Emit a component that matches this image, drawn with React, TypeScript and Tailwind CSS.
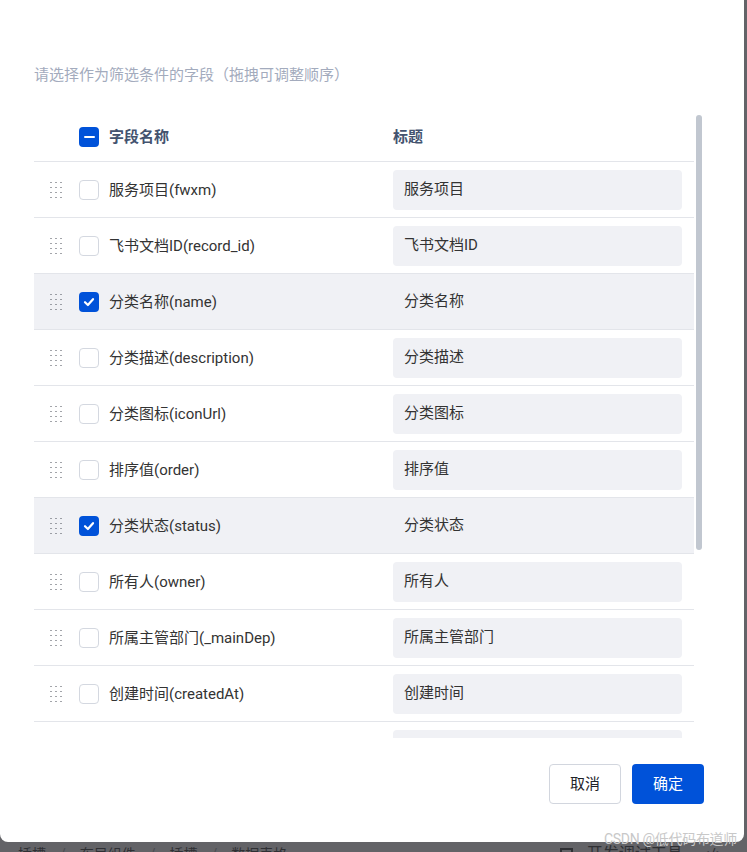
import React from "react";

type Field = { name: string; title: string; checked?: boolean };

const fields: Field[] = [
  { name: "服务项目(fwxm)", title: "服务项目" },
  { name: "飞书文档ID(record_id)", title: "飞书文档ID" },
  { name: "分类名称(name)", title: "分类名称", checked: true },
  { name: "分类描述(description)", title: "分类描述" },
  { name: "分类图标(iconUrl)", title: "分类图标" },
  { name: "排序值(order)", title: "排序值" },
  { name: "分类状态(status)", title: "分类状态", checked: true },
  { name: "所有人(owner)", title: "所有人" },
  { name: "所属主管部门(_mainDep)", title: "所属主管部门" },
  { name: "创建时间(createdAt)", title: "创建时间" },
  { name: "更新时间(updatedAt)", title: "更新时间" },
];

function DragHandle() {
  return (
    <svg width="12" height="18" viewBox="0 0 12 18" className="block">
      {[1, 6, 11].map((x) =>
        [1.5, 6.5, 11.5, 16.5].map((y) => (
          <rect key={`${x}-${y}`} x={x - 0.5} y={y - 0.5} width="1" height="1" fill="#474b55" />
        ))
      )}
    </svg>
  );
}

function Checkbox({ state }: { state: "on" | "off" | "partial" }) {
  if (state === "off") {
    return <div className="w-[20px] h-[20px] rounded-[4px] border border-[#d4d8e0] bg-white shrink-0" />;
  }
  return (
    <div className="w-[20px] h-[20px] rounded-[4px] bg-[#0052d9] shrink-0 flex items-center justify-center">
      {state === "on" ? (
        <svg width="14" height="14" viewBox="0 0 14 14">
          <path d="M3 7.2 L5.9 10 L11 4.2" fill="none" stroke="white" strokeWidth="2.2" strokeLinecap="round" strokeLinejoin="round" />
        </svg>
      ) : (
        <div className="w-[11px] h-[2.5px] bg-white rounded-[1px]" />
      )}
    </div>
  );
}

export default function App() {
  return (
    <div
      className="relative w-[747px] h-[852px] overflow-hidden bg-[#636367]"
      style={{ fontFamily: 'Roboto, "Noto Sans CJK SC", sans-serif' }}
    >
      {/* page behind the overlay */}
      <div className="flex items-center h-[20px] mt-[844px] pl-[18px] pr-[24px] text-[14px] text-[#2f3034] leading-[20px]">
        <span>插槽</span>
        <span className="mx-[14px] text-[#4a4b50]">/</span>
        <span>布局组件</span>
        <span className="mx-[14px] text-[#4a4b50]">/</span>
        <span>插槽</span>
        <span className="mx-[14px] text-[#4a4b50]">/</span>
        <span>数据表格</span>
        <div className="ml-auto flex items-center gap-[14px]">
          <div className="w-[13px] h-[13px] border-2 border-[#2f3034]" />
          <span className="text-[16px]">开发调试工具</span>
          <span className="ml-[6px]">&lt;/&gt;</span>
        </div>
      </div>

      {/* modal */}
      <div className="absolute left-0 top-0 w-[744px] h-[842px] bg-white rounded-b-[8px] flex flex-col pl-[34px] pt-[64px]">
        <p className="h-[22px] leading-[22px] text-[15px] text-[#a3abbd]">
          请选择作为筛选条件的字段（拖拽可调整顺序）
        </p>

        <div className="flex mt-[29px] h-[623px]">
          <div className="w-[660px] overflow-hidden">
            {/* header */}
            <div className="flex items-center h-[47px] pb-[2px] border-b border-[#e3e5ea]">
              <div className="w-[45px] shrink-0" />
              <Checkbox state="partial" />
              <div className="ml-[10px] w-[284px] text-[15px] font-bold text-[#44536f]">字段名称</div>
              <div className="text-[15px] font-bold text-[#44536f]">标题</div>
            </div>

            {fields.map((f) => (
              <div
                key={f.name}
                className={`flex items-center h-[56px] border-b border-[#e3e5ea] ${f.checked ? "bg-[#f0f1f5]" : "bg-white"}`}
              >
                <div className="w-[45px] shrink-0 pl-[16px]">
                  <DragHandle />
                </div>
                <Checkbox state={f.checked ? "on" : "off"} />
                <div className="ml-[10px] w-[284px] text-[15px] leading-[22px] text-[#333]">{f.name}</div>
                <div className="w-[289px] h-[40px] rounded-[4px] bg-[#f0f1f5] flex items-center pl-[11px] text-[15px] text-[#333]">
                  {f.title}
                </div>
              </div>
            ))}
          </div>
          <div className="ml-[2px] w-[6px] h-[435px] rounded-full bg-[#c1c7d0]" />
        </div>

        <div className="flex justify-end gap-[11px] mt-[26px] pr-[40px]">
          <button className="w-[72px] h-[40px] rounded-[4px] border border-[#d2d6de] bg-white text-[15px] text-[#1f2329]">
            取消
          </button>
          <button className="w-[72px] h-[40px] rounded-[4px] bg-[#0052d9] text-[15px] text-white">
            确定
          </button>
        </div>
      </div>

      {/* watermark */}
      <div className="absolute right-[10px] bottom-[4px] text-[14px] leading-[18px] text-[#c8c8c8] tracking-[-0.3px]">
        CSDN @低代码布道师
      </div>
    </div>
  );
}
